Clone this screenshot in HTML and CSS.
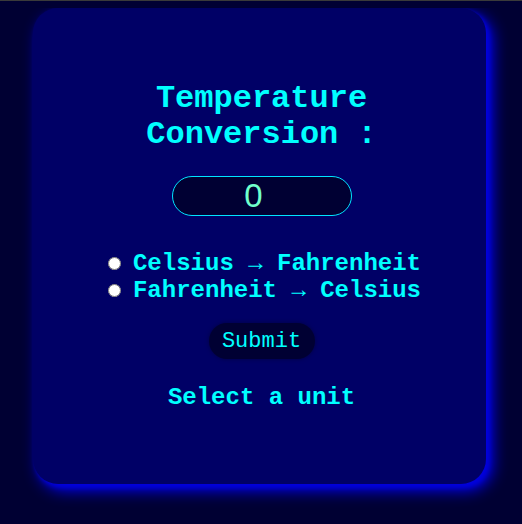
FILE: index.html
```html
<!DOCTYPE html>
<html>
<head>
<meta charset="utf-8">
<link rel="stylesheet" href="styles.css">
</head>
<body>
<main class="card">
  <h1 class="title">Temperature<br>Conversion :</h1>
  <input class="temp-input" type="text" value="0">
  <div class="options">
    <label class="option"><input type="radio" name="unit" class="radio"><span>Celsius → Fahrenheit</span></label>
    <label class="option"><input type="radio" name="unit" class="radio"><span>Fahrenheit → Celsius</span></label>
  </div>
  <button class="submit">Submit</button>
  <p class="result">Select a unit</p>
</main>
</body>
</html>
```
FILE: styles.css
```css
html {
  background: #000033;
  border-top: 1px solid #3a3a3a;
  height: 100%;
  box-sizing: border-box;
}
body {
  margin: 7px 8px 0;
  font-family: "Liberation Mono", monospace;
  min-height: 510px;
}
.card {
  width: 453px;
  height: 476px;
  margin: 0 0 0 25px;
  box-sizing: border-box;
  background: #000066;
  border-radius: 25px;
  box-shadow: 3px 3px 5px #0000dd, 6px 6px 16px #0000ff;
  display: flex;
  flex-direction: column;
  align-items: center;
  padding-top: 73px;
  padding-left: 4px;
  color: #00ffff;
}
.title {
  margin: 0;
  font-size: 32px;
  line-height: 36px;
  text-align: center;
  font-weight: bold;
}
.temp-input {
  margin-top: 23px;
  width: 180px;
  height: 40px;
  box-sizing: border-box;
  border: 1px solid #00e5ff;
  border-radius: 20px;
  background: #000033;
  color: #70ffcc;
  font-family: "Liberation Sans", sans-serif;
  font-size: 33px;
  text-align: center;
  padding: 0 16px 0 0;
  outline: none;
}
.options {
  margin-top: 34px;
  display: flex;
  flex-direction: column;
}
.option {
  display: flex;
  align-items: center;
  gap: 12px;
  font-size: 24px;
  font-weight: bold;
  line-height: 27px;
  padding-left: 6px;
}
.radio {
  margin: 0;
  width: 13px;
  height: 13px;
}
.submit {
  margin-top: 19px;
  width: 106px;
  height: 36px;
  border: none;
  border-radius: 18px;
  background: #000033;
  color: #00ffff;
  font-family: "Liberation Mono", monospace;
  font-size: 22px;
  padding: 0;
  box-shadow: 0 0 4px #000044;
}
.result {
  margin: 25px 0 0;
  font-size: 24px;
  font-weight: bold;
  line-height: 27px;
}
```
